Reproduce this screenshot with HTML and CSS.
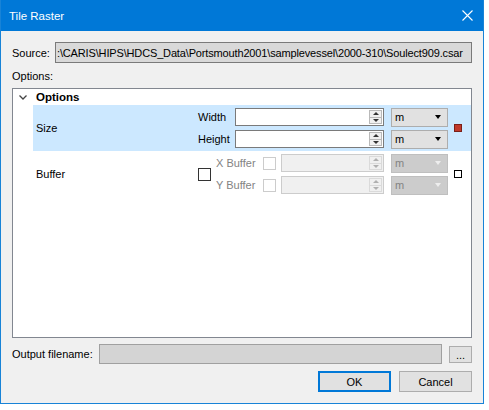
FILE: index.html
```html
<!DOCTYPE html>
<html>
<head>
<meta charset="utf-8">
<title>Tile Raster</title>
<link rel="stylesheet" href="styles.css">
</head>
<body>
<div class="window">
  <div class="titlebar">
    <span class="title">Tile Raster</span>
    <svg class="close" width="11" height="11" viewBox="0 0 11 11"><path d="M0.5 0.5 L10.5 10.5 M10.5 0.5 L0.5 10.5" stroke="#fff" stroke-width="1.1" fill="none"/></svg>
  </div>
  <div class="content">
    <div class="source-row">
      <span class="row-label source-label">Source:</span>
      <div class="field source-field">:\CARIS\HIPS\HDCS_Data\Portsmouth2001\samplevessel\2000-310\Soulect909.csar</div>
    </div>
    <div class="options-label">Options:</div>
    <div class="tree">
      <div class="tree-header">
        <svg class="chevron" width="8" height="5" viewBox="0 0 8 5"><polyline points="0.5,0.5 4,4 7.5,0.5" fill="none" stroke="#444" stroke-width="1.3"/></svg>
        <span>Options</span>
      </div>
      <div class="prop selected">
        <div class="prop-name">Size</div>
        <div class="sub-rows">
          <div class="sub-row">
            <span class="sub-label size-label">Width</span>
            <div class="spin size-spin"><div class="spin-btns"><span class="spin-btn up"></span><span class="spin-btn down"></span></div></div>
            <div class="combo"><span>m</span><span class="arrow"></span></div>
          </div>
          <div class="sub-row">
            <span class="sub-label size-label">Height</span>
            <div class="spin size-spin"><div class="spin-btns"><span class="spin-btn up"></span><span class="spin-btn down"></span></div></div>
            <div class="combo"><span>m</span><span class="arrow"></span></div>
          </div>
        </div>
        <span class="marker red"></span>
      </div>
      <div class="prop">
        <div class="prop-name">Buffer</div>
        <span class="check main-check"></span>
        <div class="sub-rows">
          <div class="sub-row disabled">
            <span class="sub-label buffer-label">X Buffer</span>
            <span class="check small-check"></span>
            <div class="spin buffer-spin"><div class="spin-btns"><span class="spin-btn up"></span><span class="spin-btn down"></span></div></div>
            <div class="combo"><span>m</span><span class="arrow"></span></div>
          </div>
          <div class="sub-row disabled">
            <span class="sub-label buffer-label">Y Buffer</span>
            <span class="check small-check"></span>
            <div class="spin buffer-spin"><div class="spin-btns"><span class="spin-btn up"></span><span class="spin-btn down"></span></div></div>
            <div class="combo"><span>m</span><span class="arrow"></span></div>
          </div>
        </div>
        <span class="marker white"></span>
      </div>
    </div>
    <div class="output-row">
      <span class="row-label output-label">Output filename:</span>
      <div class="field output-field"></div>
      <div class="browse">...</div>
    </div>
    <div class="buttons">
      <div class="btn default">OK</div>
      <div class="btn">Cancel</div>
    </div>
  </div>
</div>
</body>
</html>
```

FILE: styles.css
```css
body {
  margin: 0;
  background: #ffffff;
  font-family: "Liberation Sans", Arial, sans-serif;
  font-size: 11px;
  color: #000;
}

.window {
  width: 484px;
  height: 404px;
  box-sizing: border-box;
  border: 1px solid #1883d7;
  border-top: 0;
  background: #f0f0f0;
  display: flex;
  flex-direction: column;
  white-space: nowrap;
}

.titlebar {
  height: 31px;
  flex: none;
  background: #0078d7;
  color: #fff;
  display: flex;
  align-items: center;
  justify-content: space-between;
  padding: 0 10px 0 8px;
}

.title {
  font-size: 11.5px;
}

.close {
  display: block;
}

.content {
  padding: 0 11px;
  display: flex;
  flex-direction: column;
}

.source-row {
  margin-top: 11px;
  height: 21px;
  display: flex;
  align-items: center;
}

.source-label {
  width: 43px;
  flex: none;
}

.field {
  flex: 1;
  min-width: 0;
  box-sizing: border-box;
  display: flex;
  align-items: center;
  overflow: hidden;
}

.source-field {
  height: 21px;
  border: 1px solid #7a7a7a;
  background: #d9d9d9;
  padding: 0 1px;
  letter-spacing: -0.15px;
}

.options-label {
  height: 25px;
  display: flex;
  align-items: center;
}

.tree {
  height: 250px;
  box-sizing: border-box;
  border: 1px solid #828790;
  background: #fff;
}

.tree-header {
  height: 16px;
  display: flex;
  align-items: center;
  font-weight: bold;
  font-size: 11.5px;
}

.chevron {
  display: block;
  margin-left: 6px;
  margin-right: 9px;
}

.prop {
  height: 46px;
  margin-left: 20px;
  display: flex;
  align-items: center;
}

.prop.selected {
  background: #cce8ff;
}

.prop-name {
  width: 162px;
  padding-left: 3px;
  flex: none;
}

.sub-rows {
  display: flex;
  flex-direction: column;
  gap: 3px;
}

.sub-row {
  height: 19px;
  display: flex;
  align-items: center;
}

.size-label {
  width: 37px;
}

.buffer-label {
  width: 47px;
}

.sub-row.disabled {
  color: #838383;
}

.spin {
  height: 18px;
  box-sizing: border-box;
  border: 1px solid #7a7a7a;
  background: #fff;
  display: flex;
  justify-content: flex-end;
}

.size-spin {
  width: 149px;
}

.buffer-spin {
  width: 103px;
  border-color: #cccccc;
  background: #f0f0f0;
}

.spin-btns {
  width: 13px;
  margin: 1px 1px 1px 0;
  box-sizing: border-box;
  border: 1px solid #b9b9b9;
  background: #f0f0f0;
  display: flex;
  flex-direction: column;
}

.spin-btn {
  flex: 1;
  display: flex;
  align-items: center;
  justify-content: center;
}

.spin-btn.up {
  border-bottom: 1px solid #b9b9b9;
}

.spin-btn.up::after {
  content: "";
  border-left: 3px solid transparent;
  border-right: 3px solid transparent;
  border-bottom: 3px solid #333;
}

.spin-btn.down::after {
  content: "";
  border-left: 3px solid transparent;
  border-right: 3px solid transparent;
  border-top: 3px solid #333;
}

.buffer-spin .spin-btns {
  border-color: #dadada;
}

.buffer-spin .spin-btn.up {
  border-bottom-color: #dadada;
}

.buffer-spin .spin-btn.up::after {
  border-bottom-color: #b0b0b0;
}

.buffer-spin .spin-btn.down::after {
  border-top-color: #b0b0b0;
}

.combo {
  width: 57px;
  height: 19px;
  margin-left: 7px;
  box-sizing: border-box;
  border: 1px solid #adadad;
  background: #e1e1e1;
  display: flex;
  align-items: center;
  justify-content: space-between;
  padding: 0 6px 0 3px;
}

.arrow {
  width: 0;
  height: 0;
  border-left: 3.5px solid transparent;
  border-right: 3.5px solid transparent;
  border-top: 4px solid #000;
}

.disabled .combo {
  background: #cccccc;
  border-color: #bfbfbf;
}

.disabled .arrow {
  border-top-color: #eeeeee;
}

.check {
  width: 13px;
  height: 13px;
  box-sizing: border-box;
  border: 1px solid #333;
  background: #fff;
  flex: none;
}

.main-check {
  margin-right: 5px;
}

.small-check {
  border-color: #cccccc;
  margin-right: 5px;
}

.marker {
  width: 8px;
  height: 8px;
  box-sizing: border-box;
  margin-left: 6px;
  flex: none;
}

.marker.red {
  background: #c0392b;
  border: 1px solid #7a2018;
}

.marker.white {
  background: #fff;
  border: 1px solid #000;
}

.output-row {
  margin-top: 6px;
  height: 20px;
  display: flex;
  align-items: center;
}

.output-label {
  width: 87px;
  flex: none;
}

.output-field {
  height: 20px;
  border: 1px solid #a0a0a0;
  background: #d4d4d4;
}

.browse {
  width: 23px;
  height: 17px;
  margin-left: 7px;
  box-sizing: border-box;
  border: 1px solid #adadad;
  background: #e1e1e1;
  display: flex;
  justify-content: center;
  align-items: flex-end;
  line-height: 12px;
  padding-bottom: 1px;
}

.buttons {
  margin-top: 7px;
  display: flex;
  justify-content: flex-end;
  gap: 8px;
}

.btn {
  width: 73px;
  height: 21px;
  box-sizing: border-box;
  border: 1px solid #adadad;
  background: #e1e1e1;
  display: flex;
  align-items: center;
  justify-content: center;
}

.btn.default {
  border: 2px solid #0078d7;
}
```
